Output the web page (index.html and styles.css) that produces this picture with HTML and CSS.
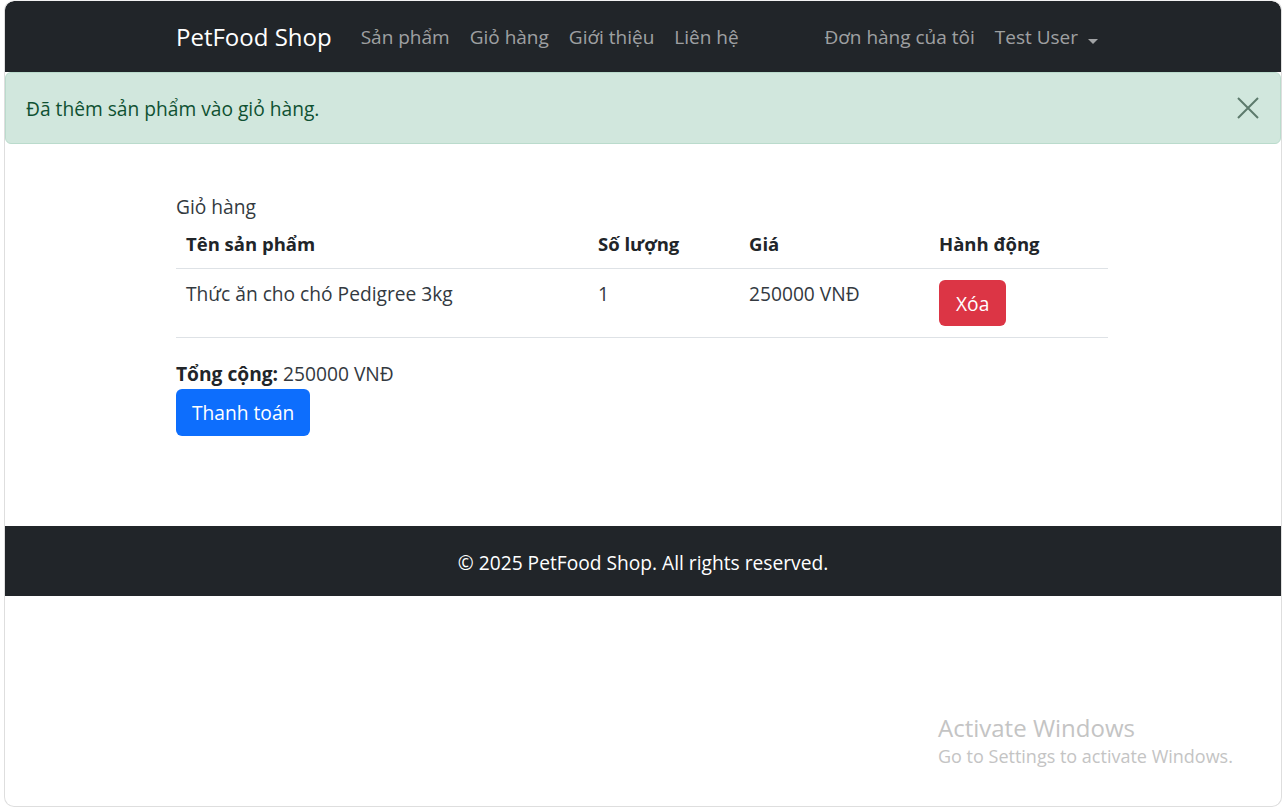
FILE: index.html
```html
<!DOCTYPE html>
<html lang="vi">
<head>
<meta charset="utf-8">
<title>Giỏ hàng - PetFood Shop</title>
<link rel="stylesheet" href="styles.css">
</head>
<body>
<div class="window">
  <nav class="navbar">
    <div class="container nav-inner">
      <a class="brand" href="#">PetFood Shop</a>
      <ul class="nav-links">
        <li><a href="#">Sản phẩm</a></li>
        <li><a href="#">Giỏ hàng</a></li>
        <li><a href="#">Giới thiệu</a></li>
        <li><a href="#">Liên hệ</a></li>
      </ul>
      <ul class="nav-links nav-right">
        <li><a href="#">Đơn hàng của tôi</a></li>
        <li><a href="#" class="dropdown">Test User<span class="caret"></span></a></li>
      </ul>
    </div>
  </nav>

  <div class="alert">
    <span>Đã thêm sản phẩm vào giỏ hàng.</span>
    <button class="close" aria-label="Close">
      <svg width="22" height="22" viewBox="0 0 22 22"><path d="M1 1 L21 21 M21 1 L1 21" stroke="currentColor" stroke-width="2" fill="none"/></svg>
    </button>
  </div>

  <main class="main">
    <div class="container">
      <div class="caption">Giỏ hàng</div>
      <table class="cart">
        <thead>
          <tr>
            <th class="c1">Tên sản phẩm</th>
            <th class="c2">Số lượng</th>
            <th class="c3">Giá</th>
            <th class="c4">Hành động</th>
          </tr>
        </thead>
        <tbody>
          <tr>
            <td>Thức ăn cho chó Pedigree 3kg</td>
            <td>1</td>
            <td>250000 VNĐ</td>
            <td><button class="btn btn-danger">Xóa</button></td>
          </tr>
        </tbody>
      </table>
      <p class="total"><strong>Tổng cộng:</strong> 250000 VNĐ</p>
      <button class="btn btn-primary">Thanh toán</button>
    </div>
  </main>

  <footer class="footer">© 2025 PetFood Shop. All rights reserved.</footer>

  <div class="watermark">
    <div class="wm-title">Activate Windows</div>
    <div class="wm-sub">Go to Settings to activate Windows.</div>
  </div>
</div>
</body>
</html>
```

FILE: styles.css
```css
* { box-sizing: border-box; }
html, body { margin: 0; padding: 0; background: #ffffff; }
body {
  font-family: "Open Sans", "Noto Sans", "Liberation Sans", sans-serif;
  font-size: 19.2px;
  color: #212529;
}
.window {
  position: relative;
  width: 1278px;
  height: 807px;
  margin-left: 4px;
  border: 1px solid #dedede;
  border-top-color: #f2f2f2;
  border-radius: 10px;
  overflow: hidden;
  background: #fff;
}
.container { width: 934px; margin: 0 auto; }

/* navbar */
.navbar { background: #212529; height: 71px; border-radius: 9px 9px 0 0; }
.nav-inner { display: flex; align-items: center; height: 100%; }
.brand { color: #fff; text-decoration: none; font-size: 24px; margin-right: 19px; }
.nav-links { list-style: none; margin: 0; padding: 0; display: flex; }
.nav-links a { display: block; padding: 0 10px; color: rgba(255,255,255,0.58); text-decoration: none; font-size: 19px; }
.nav-right { margin-left: auto; margin-right: 2px; }
.dropdown { display: flex; align-items: center; }
.caret {
  display: inline-block; margin-left: 10px; width: 0; height: 0;
  border-left: 5px solid transparent; border-right: 5px solid transparent;
  border-top: 5px solid rgba(255,255,255,0.58);
}

/* alert */
.alert {
  height: 72px;
  background: #d1e7dd;
  border: 1px solid #badbcc;
  border-radius: 6px;
  color: #0f5132;
  display: flex; align-items: center; justify-content: space-between;
  padding: 0 21px 0 20px;
}
.close { background: none; border: 0; padding: 0; color: #5c7a6c; display: flex; }

/* main */
.main { height: 382px; padding-top: 50px; }
.caption { line-height: 25px; color: #333a40; }
.cart { width: 932px; border-collapse: collapse; margin-top: 1px; }
.cart th { text-align: left; font-weight: 700; font-size: 18.5px; padding: 10px; line-height: 28px; border-bottom: 1px solid #dee2e6; }
.cart td { padding: 11px 10px; line-height: 28px; vertical-align: top; border-bottom: 1px solid #dee2e6; color: #33393f; }
.c1 { width: 412px; }
.c2 { width: 151px; }
.c3 { width: 190px; }
.total { margin: 22px 0 0; line-height: 28px; color: #33393f; }
.total strong { color: #212529; }
.btn { border: 0; border-radius: 6px; color: #fff; font-family: inherit; font-size: 19.2px; padding: 0 16px; cursor: pointer; }
.btn-danger { background: #dc3545; height: 46px; padding: 0 17px; }
.btn-primary { background: #0d6efd; height: 47px; margin-top: 1px; }

/* footer */
.footer { background: #212529; color: #fff; height: 70px; display: flex; align-items: center; justify-content: center; padding-top: 2px; }

/* windows watermark */
.watermark { position: absolute; left: 933px; top: 711px; color: #c4c4c4; }
.wm-title { font-size: 24px; line-height: 31px; }
.wm-sub { font-size: 18px; line-height: 26px; }
```
